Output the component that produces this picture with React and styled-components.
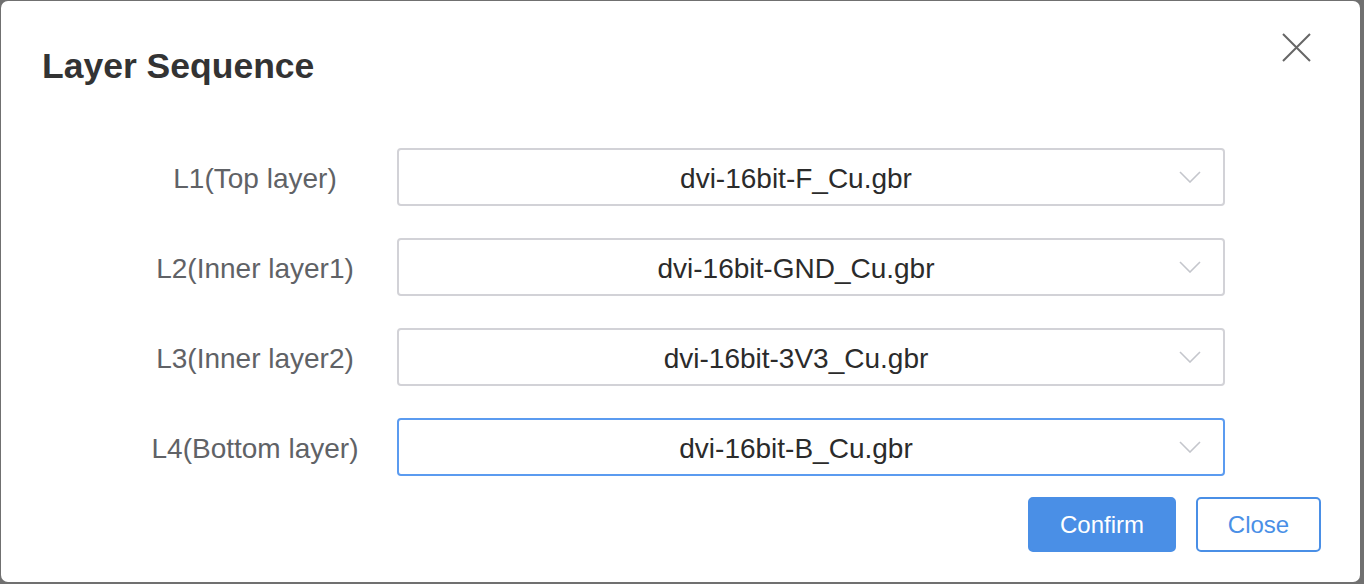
import React from 'react'
import styled, { createGlobalStyle } from 'styled-components'

const GlobalStyle = createGlobalStyle`
  html, body {
    margin: 0;
    padding: 0;
    background: #707070;
    font-family: "Liberation Sans", Arial, Helvetica, sans-serif;
  }
`

const Backdrop = styled.div`
  width: 1364px;
  height: 584px;
  padding: 1px 0 0 1px;
  box-sizing: border-box;
`

const Modal = styled.section`
  position: relative;
  width: 1359px;
  height: 581px;
  box-sizing: border-box;
  background: #fff;
  border-radius: 7px;
  padding: 44px 39px 30px 41px;
  display: flex;
  flex-direction: column;
`

const Title = styled.h2`
  margin: 0;
  font-size: 35.5px;
  line-height: 42px;
  font-weight: 700;
  color: #333;
`

const CloseIcon = styled.button`
  position: absolute;
  top: 32px;
  right: 49px;
  width: 29px;
  height: 29px;
  padding: 0;
  border: 0;
  background: none;
  cursor: pointer;
  display: flex;
`

const Form = styled.div`
  display: flex;
  flex-direction: column;
  gap: 32px;
  margin: 61px 0 0 88px;
`

const Row = styled.div`
  display: flex;
  align-items: center;
  gap: 17px;
`

const Label = styled.label`
  width: 250px;
  padding-top: 4px;
  text-align: center;
  font-size: 28px;
  color: #606266;
  white-space: nowrap;
`

const Select = styled.div`
  position: relative;
  width: 828px;
  height: 58px;
  box-sizing: border-box;
  border: ${p => (p.$focused ? '2px solid #5b9bf0' : '2px solid #d2d2d7')};
  border-radius: 4px;
  display: flex;
  align-items: center;
  justify-content: center;
  padding: 4px 30px 0 0;
  font-size: 28px;
  color: #2b2b2b;
`

const Chevron = styled.svg`
  position: absolute;
  right: 22px;
  top: 50%;
  margin-top: -6px;
`

const Footer = styled.div`
  display: flex;
  justify-content: flex-end;
  gap: 20px;
  margin-top: 21px;
`

const Button = styled.button`
  height: 55px;
  width: ${p => p.$width}px;
  box-sizing: border-box;
  border-radius: 5px;
  border: 2px solid #4a8fe6;
  background: ${p => (p.$primary ? '#4a8fe6' : '#fff')};
  color: ${p => (p.$primary ? '#fff' : '#4a8fe6')};
  font-family: inherit;
  font-size: 24px;
  cursor: pointer;
`

const layers = [
  { label: 'L1(Top layer)', file: 'dvi-16bit-F_Cu.gbr' },
  { label: 'L2(Inner layer1)', file: 'dvi-16bit-GND_Cu.gbr' },
  { label: 'L3(Inner layer2)', file: 'dvi-16bit-3V3_Cu.gbr' },
  { label: 'L4(Bottom layer)', file: 'dvi-16bit-B_Cu.gbr', focused: true },
]

const App = () => (
  <Backdrop>
    <GlobalStyle />
    <Modal>
      <Title>Layer Sequence</Title>
      <CloseIcon aria-label="close">
        <svg width="29" height="29" viewBox="0 0 29 29">
          <path d="M1 1L28 28M28 1L1 28" stroke="#666" strokeWidth="2" fill="none" />
        </svg>
      </CloseIcon>
      <Form>
        {layers.map(l => (
          <Row key={l.label}>
            <Label>{l.label}</Label>
            <Select $focused={l.focused}>
              {l.file}
              <Chevron width="22" height="12" viewBox="0 0 22 12">
                <path d="M1 1L11 11L21 1" stroke="#c4c6cc" strokeWidth="1.6" fill="none" />
              </Chevron>
            </Select>
          </Row>
        ))}
      </Form>
      <Footer>
        <Button $primary $width={148}>Confirm</Button>
        <Button $width={125}>Close</Button>
      </Footer>
    </Modal>
  </Backdrop>
)

export default App
